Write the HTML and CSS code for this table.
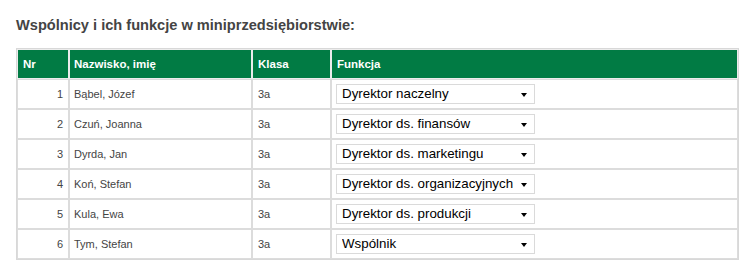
FILE: index.html
```html
<!DOCTYPE html>
<html lang="pl">
<head>
<meta charset="utf-8">
<title>Wspólnicy</title>
<link rel="stylesheet" href="styles.css">
</head>
<body>
<div class="page">
  <h2 class="title">Wspólnicy i ich funkcje w miniprzedsiębiorstwie:</h2>
  <table class="grid">
    <thead>
      <tr>
        <th class="c-nr">Nr</th>
        <th class="c-name">Nazwisko, imię</th>
        <th class="c-cls">Klasa</th>
        <th class="c-fn">Funkcja</th>
      </tr>
    </thead>
    <tbody>
      <tr>
        <td class="c-nr num">1</td>
        <td class="c-name">Bąbel, Józef</td>
        <td class="c-cls">3a</td>
        <td class="c-fn"><span class="pick"><select><option>Dyrektor naczelny</option></select></span></td>
      </tr>
      <tr>
        <td class="c-nr num">2</td>
        <td class="c-name">Czuń, Joanna</td>
        <td class="c-cls">3a</td>
        <td class="c-fn"><span class="pick"><select><option>Dyrektor ds. finansów</option></select></span></td>
      </tr>
      <tr>
        <td class="c-nr num">3</td>
        <td class="c-name">Dyrda, Jan</td>
        <td class="c-cls">3a</td>
        <td class="c-fn"><span class="pick"><select><option>Dyrektor ds. marketingu</option></select></span></td>
      </tr>
      <tr>
        <td class="c-nr num">4</td>
        <td class="c-name">Koń, Stefan</td>
        <td class="c-cls">3a</td>
        <td class="c-fn"><span class="pick"><select><option>Dyrektor ds. organizacyjnych</option></select></span></td>
      </tr>
      <tr>
        <td class="c-nr num">5</td>
        <td class="c-name">Kula, Ewa</td>
        <td class="c-cls">3a</td>
        <td class="c-fn"><span class="pick"><select><option>Dyrektor ds. produkcji</option></select></span></td>
      </tr>
      <tr>
        <td class="c-nr num">6</td>
        <td class="c-name">Tym, Stefan</td>
        <td class="c-cls">3a</td>
        <td class="c-fn"><span class="pick"><select><option>Wspólnik</option></select></span></td>
      </tr>
    </tbody>
  </table>
</div>
</body>
</html>
```

FILE: styles.css
```css
html, body {
  margin: 0;
  padding: 0;
  background: #fff;
}

body {
  font-family: "Liberation Sans", Arial, sans-serif;
  color: #444;
}

.page {
  padding: 17px 0 0 16px;
}

.title {
  margin: 0 0 15px 0;
  font-size: 14.6px;
  line-height: 16px;
  font-weight: bold;
  color: #444;
}

.grid {
  border-collapse: separate;
  border-spacing: 0;
  border: 1px solid #d8d8d8;
  table-layout: fixed;
  width: 723px;
}

.grid th,
.grid td {
  box-sizing: border-box;
  height: 30px;
  padding: 0 5px;
  border: 1px solid #dcdcdc;
  vertical-align: middle;
  white-space: nowrap;
}

.grid th {
  background: #017b44;
  color: #fff;
  font-size: 11.5px;
  font-weight: bold;
  text-align: left;
  border-color: #ececec;
}

.grid td {
  font-size: 11px;
  color: #444;
  background: #fff;
}

.c-nr { width: 52px; }
.c-name { width: 183px; }
.c-cls { width: 79px; }

.grid .c-name { padding-left: 4px; }
.grid td.c-fn { padding-left: 4px; }

.grid td.num {
  text-align: right;
}

.pick {
  position: relative;
  display: inline-block;
  vertical-align: middle;
}

.pick select {
  -webkit-appearance: none;
  appearance: none;
  display: block;
  box-sizing: border-box;
  width: 199px;
  height: 20px;
  margin: 0;
  padding: 0 0 0 5px;
  border: 1px solid #dadada;
  border-radius: 0;
  background: #fff;
  color: #000;
  font-family: "Liberation Sans", Arial, sans-serif;
  font-size: 13.33px;
  line-height: 18px;
}

.pick::after {
  content: "";
  position: absolute;
  right: 8px;
  top: 9px;
  width: 0;
  height: 0;
  border-left: 3.5px solid transparent;
  border-right: 3.5px solid transparent;
  border-top: 4px solid #000;
  pointer-events: none;
}
```
